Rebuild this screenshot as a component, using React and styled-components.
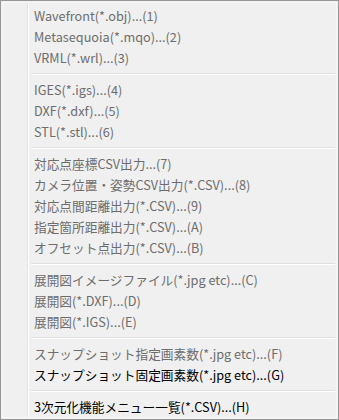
import React from 'react';
import styled, { createGlobalStyle } from 'styled-components';

const GlobalStyle = createGlobalStyle`
  html, body {
    margin: 0;
    padding: 0;
    background: #fff;
  }
`

const MenuWrapper = styled.div`
  box-sizing: border-box;
  width: 339px;
  height: 420px;
  border: 1px solid #979797;
  background: #f0f0f0;
  padding: 1px;
  font-family: "Noto Sans CJK JP", "Noto Sans", sans-serif;
`

const MenuInner = styled.ul`
  box-sizing: border-box;
  height: 100%;
  margin: 0;
  padding: 2px 1px;
  list-style: none;
  border: 1px solid #f7f7f7;
  // icon gutter line
  background: linear-gradient(to right,
    transparent 0, transparent 24px,
    #e2e3e3 24px, #e2e3e3 25px,
    #ffffff 25px, #ffffff 26px,
    transparent 26px);
`

const Item = styled.li`
  height: 21px;
  line-height: 21px;
  padding-left: 30px;
  font-size: 12.7px;
  white-space: nowrap;
  color: ${({enabled}) => enabled ? '#000' : '#6d6d6d'};
`

const Separator = styled.li`
  height: 11px;
  display: flex;
  align-items: center;
  padding-left: 27px;
  &::after {
    content: '';
    flex: 1;
    height: 0;
    border-top: 1px solid #e0e0e0;
    border-bottom: 1px solid #ffffff;
  }
`

const groups = [
  ['Wavefront(*.obj)...(1)', 'Metasequoia(*.mqo)...(2)', 'VRML(*.wrl)...(3)'],
  ['IGES(*.igs)...(4)', 'DXF(*.dxf)...(5)', 'STL(*.stl)...(6)'],
  [
    '対応点座標CSV出力...(7)',
    'カメラ位置・姿勢CSV出力(*.CSV)...(8)',
    '対応点間距離出力(*.CSV)...(9)',
    '指定箇所距離出力(*.CSV)...(A)',
    'オフセット点出力(*.CSV)...(B)',
  ],
  ['展開図イメージファイル(*.jpg etc)...(C)', '展開図(*.DXF)...(D)', '展開図(*.IGS)...(E)'],
  ['スナップショット指定画素数(*.jpg etc)...(F)', 'スナップショット固定画素数(*.jpg etc)...(G)'],
  ['3次元化機能メニュー一覧(*.CSV)...(H)'],
]

const enabledItems = [
  'スナップショット固定画素数(*.jpg etc)...(G)',
  '3次元化機能メニュー一覧(*.CSV)...(H)',
]

function App() {
  return (
    <>
      <GlobalStyle />
      <MenuWrapper>
        <MenuInner>
          {groups.map((group, gi) => (
            <React.Fragment key={gi}>
              {gi > 0 && <Separator />}
              {group.map(label => (
                <Item key={label} enabled={enabledItems.includes(label)}>{label}</Item>
              ))}
            </React.Fragment>
          ))}
        </MenuInner>
      </MenuWrapper>
    </>
  );
}

export default App;
